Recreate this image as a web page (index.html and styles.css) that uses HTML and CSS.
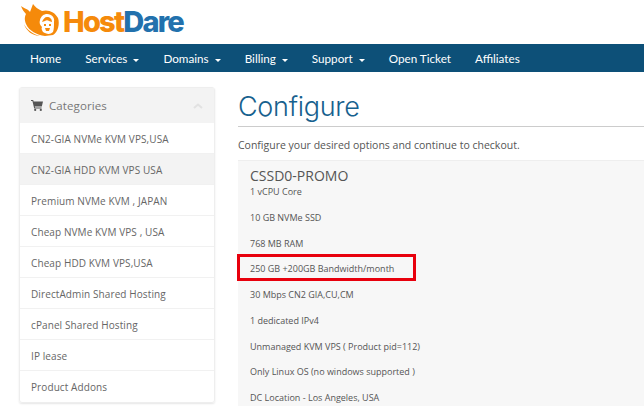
FILE: index.html
```html
<!DOCTYPE html>
<html>
<head>
	<title>Configure - HostDare</title>
	<meta charset="utf-8">
	<link rel="stylesheet" href="styles.css">
</head>
<body>

	<div id="page-container">

		<div id="header">
			<svg class="logo-icon" width="40" height="36" viewBox="0 0 40 36">
				<path fill="#f58a0b" d="M1 4 C5 7 8 7 10 10 C11 7 12 5 13 2 C15 5 18 7 22 9 C28 7 35 10 38 16 C40 22 38 30 33 33 L25 34 C17 33 9 29 6 22 C4 17 5 14 6 12 C4 10 2 7 1 4 Z"/>
				<path fill="#f58a0b" d="M4 22 C7 28 13 32 20 34 C13 34 6 29 4 22 Z"/>
				<path fill="#fff" d="M27 12 C32 12 35 16 34 20 C34 24 34 27 33 30 C30 33 26 32 23 30 C22 28 21 27 22 25 C20 23 19 21 20 18 C21 14 24 12 27 12 Z"/>
				<path fill="#f58a0b" d="M27 15 C30 15 32 17 32 20 L29 19 C28 18 26 18 25 19 L22 20 C23 17 25 15 27 15 Z M24 22 L26 22 L26 24 L24 24 Z M29 22 L31 22 L31 24 L29 24 Z M25 26 L30 26 L29 29 L26 29 Z"/>
			</svg>
			<span class="logo-text"><span class="logo-host">Host</span><span class="logo-dare">Dare</span></span>
		</div>

		<div id="nav">
			<a>Home</a>
			<a>Services <i class="caret"></i></a>
			<a>Domains <i class="caret"></i></a>
			<a>Billing <i class="caret"></i></a>
			<a>Support <i class="caret"></i></a>
			<a>Open Ticket</a>
			<a>Affiliates</a>
		</div>

		<div id="content">

			<div id="sidebar">
				<div class="side-head">
					<svg class="cart" width="12" height="11" viewBox="0 0 12 11">
						<path fill="#555" d="M0 0 H2.2 L2.6 1.4 H12 L10.8 6.6 H3.8 L4.1 7.6 H10.6 V8.6 H3.2 L1.4 1 H0 Z"/>
						<circle fill="#555" cx="4.2" cy="9.9" r="1.1"/>
						<circle fill="#555" cx="9.8" cy="9.9" r="1.1"/>
					</svg>
					<span class="side-title">Categories</span>
					<svg class="chevron" width="10" height="6" viewBox="0 0 10 6">
						<path fill="none" stroke="#e2e2e2" stroke-width="2" d="M1 5 L5 1.5 L9 5"/>
					</svg>
				</div>
				<a class="side-item">CN2-GIA NVMe KVM VPS,USA</a>
				<a class="side-item active">CN2-GIA HDD KVM VPS USA</a>
				<a class="side-item">Premium NVMe KVM , JAPAN</a>
				<a class="side-item">Cheap NVMe KVM VPS , USA</a>
				<a class="side-item">Cheap HDD KVM VPS,USA</a>
				<a class="side-item">DirectAdmin Shared Hosting</a>
				<a class="side-item">cPanel Shared Hosting</a>
				<a class="side-item">IP lease</a>
				<a class="side-item">Product Addons</a>
			</div>

			<div id="main">
				<h1>Configure</h1>
				<p class="intro">Configure your desired options and continue to checkout.</p>
				<div class="product">
					<h2>CSSD0-PROMO</h2>
					<p>1 vCPU Core</p>
					<p>10 GB NVMe SSD</p>
					<p>768 MB RAM</p>
					<p><span class="mark">250 GB +200GB Bandwidth/month</span></p>
					<p>30 Mbps CN2 GIA,CU,CM</p>
					<p>1 dedicated IPv4</p>
					<p>Unmanaged KVM VPS ( Product pid=112)</p>
					<p>Only Linux OS (no windows supported )</p>
					<p>DC Location - Los Angeles, USA</p>
				</div>
			</div>

		</div>

	</div>

</body>
</html>
```

FILE: styles.css
```css
* {
	margin: 0;
	padding: 0;
	box-sizing: border-box;
}

html, body {
	height: 100%;
	overflow: hidden;
	background-color: white;
}

body {
	font-family: "Open Sans", sans-serif;
	font-size: 11px;
	color: #555;
}

#page-container {
	width: 644px;
	height: 406px;
	overflow: hidden;
}

	#header {
		display: flex;
		align-items: center;
		height: 44px;
		padding: 0 0 2px 20px;
	}

		.logo-icon {
			margin-right: 3px;
			margin-top: -3px;
		}

		.logo-text {
			font-family: "Inter", sans-serif;
			font-size: 29px;
			font-weight: 800;
			letter-spacing: -1.8px;
		}

		.logo-host {
			color: #f58a0b;
		}

		.logo-dare {
			color: #2271ad;
		}

	#nav {
		display: flex;
		align-items: center;
		gap: 24px;
		height: 28px;
		padding-left: 30px;
		background-color: #0d5078;
		color: white;
		font-family: "Lato", sans-serif;
		font-size: 11.7px;
	}

		.caret {
			display: inline-block;
			width: 0;
			height: 0;
			margin-left: 3px;
			vertical-align: middle;
			border-top: 3px solid white;
			border-left: 3px solid transparent;
			border-right: 3px solid transparent;
		}

	#content {
		display: flex;
		align-items: flex-start;
		padding: 15px 0 0 19px;
	}

		#sidebar {
			flex: none;
			width: 196px;
			border: 1px solid #eee;
			border-radius: 3px;
			box-shadow: 0 1px 2px rgba(0, 0, 0, 0.1);
			letter-spacing: 0.1px;
		}

			.side-head {
				display: flex;
				align-items: center;
				height: 35px;
				padding: 0 11px;
				background-color: #f3f3f3;
			}

				.cart {
					margin-right: 6px;
				}

				.side-title {
					flex: 1;
					font-size: 11.5px;
					color: #777;
				}

			.side-item {
				display: block;
				height: 31px;
				padding-left: 11px;
				line-height: 32px;
				border-bottom: 1px solid #f1f1f1;
				font-size: 10px;
				color: #666;
			}

			.side-item:last-child {
				border-bottom: none;
			}

			.active {
				background-color: #f3f3f3;
			}

		#main {
			flex: none;
			width: 500px;
			margin-left: 23px;
		}

			h1 {
				height: 40px;
				border-bottom: 1px solid #ccc;
				font-family: "Inter", sans-serif;
				font-size: 27px;
				font-weight: 300;
				line-height: 40px;
				letter-spacing: -0.3px;
				color: #17618e;
			}

			.intro {
				margin: 10px 0 7px;
				line-height: 16px;
				font-size: 10.5px;
			}

			.product {
				min-height: 300px;
				padding: 7px 12px 0;
				background-color: #f7f7f7;
				border-top: 1px solid #eee;
				font-size: 9px;
			}

				.product h2 {
					font-size: 14px;
					font-weight: 400;
					line-height: 16px;
				}

				.product p {
					height: 25.75px;
					line-height: 16px;
				}

				.mark {
					position: relative;
				}

				.mark::after {
					content: "";
					position: absolute;
					top: -8px;
					bottom: -6px;
					left: -13px;
					right: -22px;
					border: 3px solid #e8000d;
				}
```
